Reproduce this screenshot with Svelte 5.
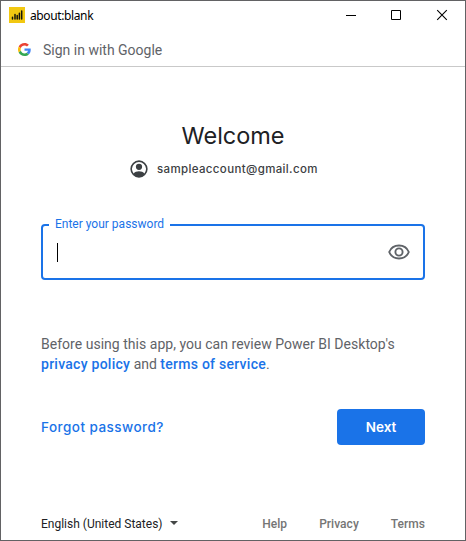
<script>
  const footerLinks = ['Help', 'Privacy', 'Terms'];
</script>

<div class="window">
  <header class="titlebar">
    <svg class="app-icon" width="16" height="16" viewBox="0 0 16 16">
      <rect width="16" height="16" fill="#f2c811" />
      <path d="M3.500 10.300v1.700M6 7.500V12M8.200 8.500V12M10.400 6.200V12M12.700 4V12" stroke="#15150c" stroke-width="1.500" stroke-linecap="round" />
    </svg>
    <span class="title">about:blank</span>
    <div class="controls">
      <svg width="46" height="30" viewBox="0 0 46 30"><path d="M18 14.5h10" stroke="#000" /></svg>
      <svg width="46" height="30" viewBox="0 0 46 30"><path d="M17.5 9.5h9v9h-9z" fill="none" stroke="#000" /></svg>
      <svg width="46" height="30" viewBox="0 0 46 30"><path d="M17.2 9.2l9.6 9.6M26.8 9.2l-9.6 9.6" stroke="#000" stroke-width="1.1" /></svg>
    </div>
  </header>

  <div class="brand">
    <svg width="13" height="13" viewBox="0 0 48 48">
      <path fill="#EA4335" d="M24 9.5c3.54 0 6.71 1.22 9.21 3.6l6.85-6.85C35.9 2.38 30.47 0 24 0 14.62 0 6.51 5.38 2.56 13.22l7.98 6.19C12.43 13.72 17.74 9.5 24 9.5z" />
      <path fill="#4285F4" d="M46.98 24.55c0-1.57-.15-3.09-.38-4.55H24v9.02h12.94c-.58 2.96-2.26 5.48-4.78 7.18l7.73 6c4.51-4.18 7.09-10.36 7.09-17.65z" />
      <path fill="#FBBC05" d="M10.53 28.59c-.48-1.45-.76-2.99-.76-4.59s.27-3.14.76-4.59l-7.98-6.19C.92 16.46 0 20.12 0 24s.92 7.54 2.56 10.78l7.97-6.19z" />
      <path fill="#34A853" d="M24 48c6.48 0 11.93-2.13 15.89-5.81l-7.73-6c-2.15 1.45-4.92 2.3-8.16 2.3-6.26 0-11.57-4.22-13.47-9.91l-7.98 6.19C6.51 42.62 14.62 48 24 48z" />
    </svg>
    <span>Sign in with Google</span>
  </div>

  <main>
    <h1>Welcome</h1>
    <div class="account">
      <svg width="18" height="18" viewBox="1.6 1.6 20.8 20.8" fill="#3c4043">
        <path fill-rule="evenodd" d="M12 2a10 10 0 1 0 0 20 10 10 0 0 0 0-20zM5.7 17.1a8.1 8.1 0 1 1 12.6 0C17 15.500 14.500 14.600 12 14.600s-5 .9-6.300 2.500z" />
        <circle cx="12" cy="9.500" r="3.600" />
      </svg>
      <span>sampleaccount@gmail.com</span>
    </div>

    <div class="field">
      <label for="password">Enter your password</label>
      <span class="caret" id="password"></span>
      <svg width="24" height="24" viewBox="0 0 24 24" fill="none" stroke="#5f6368" stroke-width="1.900">
        <path d="M2.200 12C3.900 7.900 7.600 5.500 12 5.500s8.100 2.400 9.800 6.500c-1.700 4.100-5.400 6.500-9.800 6.500S3.900 16.100 2.200 12z" />
        <circle cx="12" cy="12" r="3.600" />
      </svg>
    </div>

    <p><span class="review">Before using this app, you can review Power BI Desktop's</span><br /><b class="policy">privacy policy</b> and <b class="policy">terms of service</b>.</p>

    <div class="actions">
      <span class="forgot">Forgot password?</span>
      <button>Next</button>
    </div>
  </main>

  <footer>
    <span class="language">English (United States)</span>
    <svg width="8" height="4" viewBox="0 0 8 4"><path d="M0 0h8L4 4z" fill="#444746" /></svg>
    <nav>
      {#each footerLinks as link}<span>{link}</span>{/each}
    </nav>
  </footer>
</div>

<style>
  :global(body) { margin: 0; background: #fff; }
  * { box-sizing: border-box; }
  svg { display: block; flex: none; }
  .window {
    width: 466px;
    height: 541px;
    display: flex;
    flex-direction: column;
    border: 1px solid #626264;
    background: #fff;
    font-family: Roboto, sans-serif;
    color: #5f6368;
    white-space: nowrap;
    overflow: hidden;
  }
  .titlebar { display: flex; height: 30px; padding-left: 8px; flex: none; }
  .app-icon { margin-top: 6px; }
  .title { margin: 6px 0 0 5px; font: 12px/18px "Noto Sans", sans-serif; color: #000; letter-spacing: -0.38px; }
  .controls { display: flex; margin-left: auto; margin-right: -1px; }
  .brand { display: flex; align-items: center; height: 36px; padding: 2px 0 0 17px; border-bottom: 1px solid #c9c9c9; flex: none; font-size: 14px; }
  .brand span { margin-left: 12px; line-height: 20px; }
  main { padding: 0 40px; display: flex; flex-direction: column; }
  h1 { margin: 53px 0 0; font: 400 23.500px/32px Inter, sans-serif; color: #202124; text-align: center; letter-spacing: -0.05px; }
  .account { display: flex; align-items: center; height: 20px; margin: 7px 0 0 89px; }
  .account span { margin-left: 9px; font: 500 11.500px/20px Inter, sans-serif; color: #3c4043; letter-spacing: 0.36px; }
  .field { display: flex; align-items: center; position: relative; height: 56px; margin-top: 45px; padding: 0 12px 0 14px; border: 2px solid #1a73e8; border-radius: 4px; }
  label { position: absolute; top: -11px; left: 6px; padding: 0 6px; background: #fff; color: #1a73e8; font-size: 12px; line-height: 18px; }
  .caret { width: 1px; height: 19px; background: #000; }
  .field svg { margin-left: auto; }
  p { margin: 54px 0 0; font-size: 14px; line-height: 20px; }
  .review { letter-spacing: 0.025px; }
  .policy { font-weight: 500; color: #1a73e8; letter-spacing: 0.26px; }
  .actions { display: flex; align-items: center; justify-content: space-between; margin-top: 35px; }
  .forgot { font: 500 13.500px/20px Inter, sans-serif; color: #1a73e8; letter-spacing: 0.46px; }
  button { width: 88px; height: 36px; border: 0; border-radius: 4px; background: #1a73e8; color: #fff; padding: 0; font: 600 13.500px/36px Inter, sans-serif; }
  footer { display: flex; align-items: center; height: 20px; margin: auto 40px 6px; font-size: 12px; line-height: 20px; color: #202124; }
  footer svg { margin: -2px 0 0 7px; }
  nav { display: flex; gap: 32px; margin-left: auto; color: #757575; font-weight: 500; letter-spacing: 0.03px; }
</style>
